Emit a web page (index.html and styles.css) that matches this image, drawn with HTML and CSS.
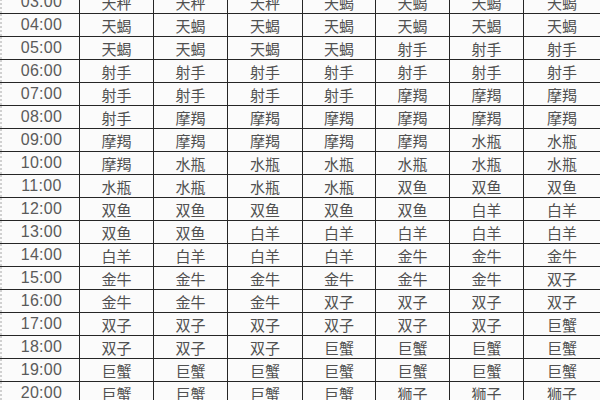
FILE: index.html
```html
<!DOCTYPE html>
<html lang="zh">
<head>
<meta charset="utf-8">
<title>星座时间表</title>
<link rel="stylesheet" href="styles.css">
</head>
<body>
<div class="sheet">
<div class="grid">
<div class="c t">03:00</div><div class="c">天秤</div><div class="c">天秤</div><div class="c">天秤</div><div class="c">天蝎</div><div class="c">天蝎</div><div class="c">天蝎</div><div class="c">天蝎</div>
<div class="c t">04:00</div><div class="c">天蝎</div><div class="c">天蝎</div><div class="c">天蝎</div><div class="c">天蝎</div><div class="c">天蝎</div><div class="c">天蝎</div><div class="c">天蝎</div>
<div class="c t">05:00</div><div class="c">天蝎</div><div class="c">天蝎</div><div class="c">天蝎</div><div class="c">天蝎</div><div class="c">射手</div><div class="c">射手</div><div class="c">射手</div>
<div class="c t">06:00</div><div class="c">射手</div><div class="c">射手</div><div class="c">射手</div><div class="c">射手</div><div class="c">射手</div><div class="c">射手</div><div class="c">射手</div>
<div class="c t">07:00</div><div class="c">射手</div><div class="c">射手</div><div class="c">射手</div><div class="c">射手</div><div class="c">摩羯</div><div class="c">摩羯</div><div class="c">摩羯</div>
<div class="c t">08:00</div><div class="c">射手</div><div class="c">摩羯</div><div class="c">摩羯</div><div class="c">摩羯</div><div class="c">摩羯</div><div class="c">摩羯</div><div class="c">摩羯</div>
<div class="c t">09:00</div><div class="c">摩羯</div><div class="c">摩羯</div><div class="c">摩羯</div><div class="c">摩羯</div><div class="c">摩羯</div><div class="c">水瓶</div><div class="c">水瓶</div>
<div class="c t">10:00</div><div class="c">摩羯</div><div class="c">水瓶</div><div class="c">水瓶</div><div class="c">水瓶</div><div class="c">水瓶</div><div class="c">水瓶</div><div class="c">水瓶</div>
<div class="c t">11:00</div><div class="c">水瓶</div><div class="c">水瓶</div><div class="c">水瓶</div><div class="c">水瓶</div><div class="c">双鱼</div><div class="c">双鱼</div><div class="c">双鱼</div>
<div class="c t">12:00</div><div class="c">双鱼</div><div class="c">双鱼</div><div class="c">双鱼</div><div class="c">双鱼</div><div class="c">双鱼</div><div class="c">白羊</div><div class="c">白羊</div>
<div class="c t">13:00</div><div class="c">双鱼</div><div class="c">双鱼</div><div class="c">白羊</div><div class="c">白羊</div><div class="c">白羊</div><div class="c">白羊</div><div class="c">白羊</div>
<div class="c t">14:00</div><div class="c">白羊</div><div class="c">白羊</div><div class="c">白羊</div><div class="c">白羊</div><div class="c">金牛</div><div class="c">金牛</div><div class="c">金牛</div>
<div class="c t">15:00</div><div class="c">金牛</div><div class="c">金牛</div><div class="c">金牛</div><div class="c">金牛</div><div class="c">金牛</div><div class="c">金牛</div><div class="c">双子</div>
<div class="c t">16:00</div><div class="c">金牛</div><div class="c">金牛</div><div class="c">金牛</div><div class="c">双子</div><div class="c">双子</div><div class="c">双子</div><div class="c">双子</div>
<div class="c t">17:00</div><div class="c">双子</div><div class="c">双子</div><div class="c">双子</div><div class="c">双子</div><div class="c">双子</div><div class="c">双子</div><div class="c">巨蟹</div>
<div class="c t">18:00</div><div class="c">双子</div><div class="c">双子</div><div class="c">双子</div><div class="c">巨蟹</div><div class="c">巨蟹</div><div class="c">巨蟹</div><div class="c">巨蟹</div>
<div class="c t">19:00</div><div class="c">巨蟹</div><div class="c">巨蟹</div><div class="c">巨蟹</div><div class="c">巨蟹</div><div class="c">巨蟹</div><div class="c">巨蟹</div><div class="c">巨蟹</div>
<div class="c t">20:00</div><div class="c">巨蟹</div><div class="c">巨蟹</div><div class="c">巨蟹</div><div class="c">巨蟹</div><div class="c">狮子</div><div class="c">狮子</div><div class="c">狮子</div>
</div>
</div>
</body>
</html>
```
FILE: styles.css
```css
html, body {
  margin: 0;
  padding: 0;
  background: #fbfbfb;
  overflow: hidden;
}
.sheet {
  width: 600px;
  height: 400px;
  overflow: hidden;
}
.grid {
  margin-top: -9px;
  display: grid;
  grid-template-columns: 79px 73px 73px 74px 72px 73px 73px 76px;
  grid-auto-rows: 22px;
  gap: 1px;
  background: #262626;
  border-bottom: 1px solid #262626;
}
.c {
  background: #fbfbfb;
  display: flex;
  align-items: center;
  justify-content: center;
  font-family: "Noto Sans CJK SC", "Noto Sans", sans-serif;
  font-size: 15px;
  color: #505050;
  line-height: 1;
}
.t {
  font-family: "Liberation Sans", Arial, sans-serif;
  font-size: 16px;
  letter-spacing: 0.3px;
  padding-left: 2px;
  color: #5a5a5a;
  border-left: 2px dotted #d0d0d0;
}
```
